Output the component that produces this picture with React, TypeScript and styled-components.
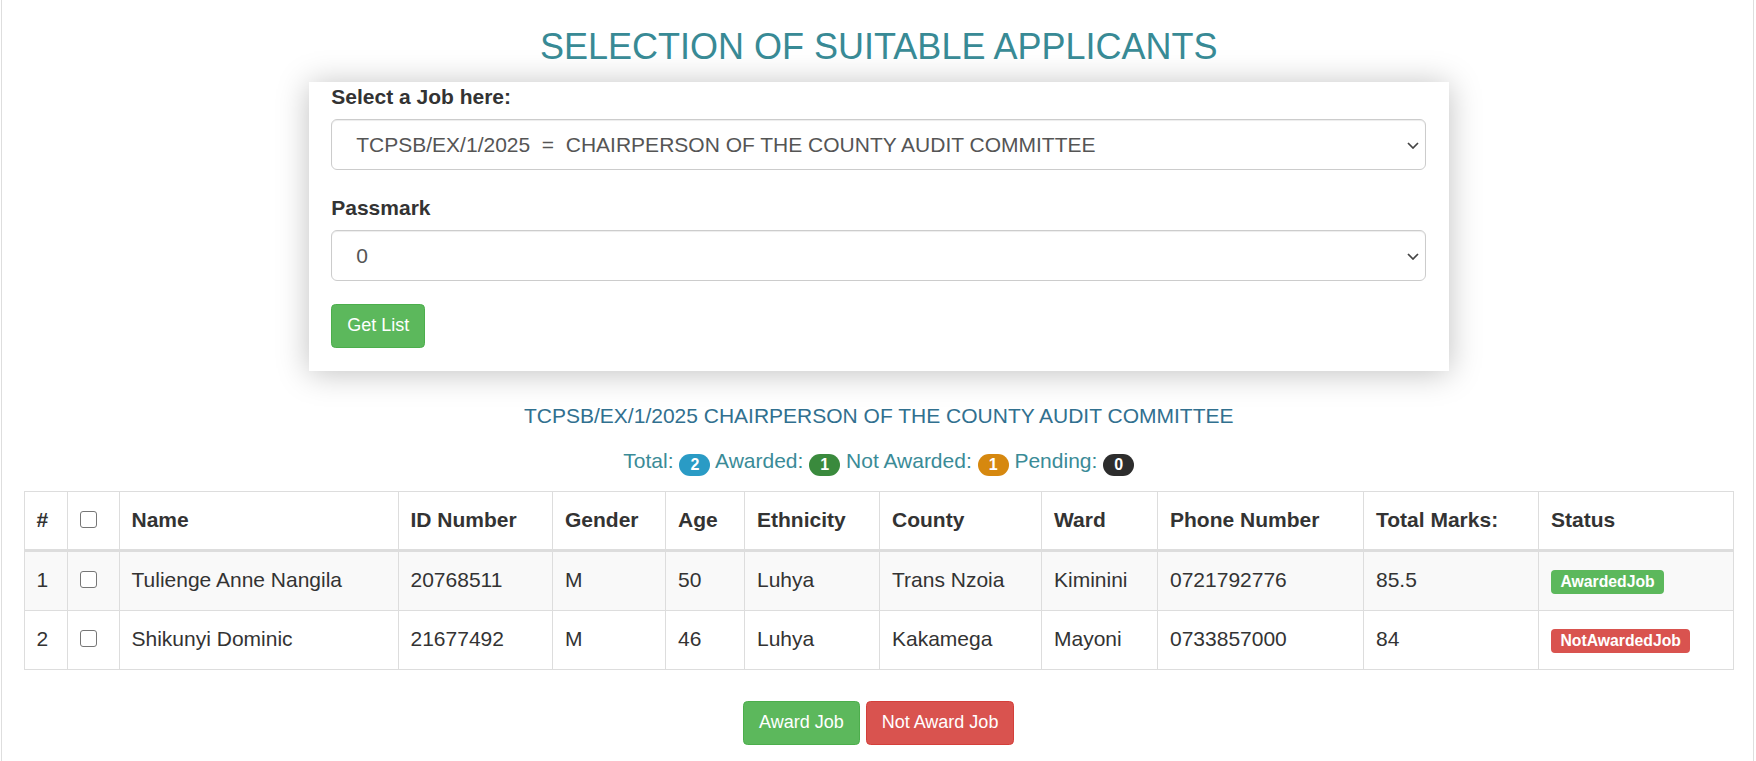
import React from "react";
import styled, { createGlobalStyle } from "styled-components";

const GlobalStyle = createGlobalStyle`
  html, body {
    margin: 0;
    padding: 0;
    background: #fff;
  }
  body {
    font-family: "Liberation Sans", Arial, sans-serif;
    font-size: 21px;
    line-height: 30px;
    color: #333;
  }
  * {
    box-sizing: border-box;
  }
`;

const Page = styled.div`
  min-height: 100vh;
  margin: 0 2px 0 1px;
  padding: 27px 19px 20px 21.5px;
  border-left: 1.5px solid #dedede;
  border-right: 1.5px solid #dedede;
`;

const Title = styled.h3`
  margin: 0 0 15px;
  font-size: 36px;
  line-height: 39.6px;
  font-weight: 400;
  color: #388a95;
  text-align: center;
`;

const Card = styled.div`
  width: 1140px;
  margin: 0 auto;
  padding: 0 22.5px 23px;
  background: #fff;
  box-shadow: 0 2px 30px rgba(0, 0, 0, 0.25);
`;

const FormGroup = styled.div`
  margin-bottom: 22.5px;
`;

const Label = styled.label`
  display: block;
  margin-bottom: 7.5px;
  font-weight: 700;
`;

const SelectWrap = styled.div`
  position: relative;
`;

const Select = styled.select`
  display: block;
  width: 100%;
  height: 51px;
  padding: 0 40px 0 24px;
  font-family: inherit;
  font-size: 21px;
  color: #555;
  background: #fff;
  border: 1.5px solid #ccc;
  border-radius: 6px;
  box-shadow: inset 0 1px 1px rgba(0, 0, 0, 0.075);
  appearance: none;
  outline: none;
`;

const Chevron = styled.svg`
  position: absolute;
  right: 7px;
  top: 50%;
  width: 12px;
  height: 7px;
  margin-top: -3px;
  pointer-events: none;
`;

const Button = styled.button<{ $variant: "success" | "danger" }>`
  display: inline-block;
  padding: 7.5px 15px;
  font-family: inherit;
  font-size: 18px;
  line-height: 27px;
  color: #fff;
  background: ${(p) => (p.$variant === "danger" ? "#d9534f" : "#5cb85c")};
  border: 1.5px solid ${(p) => (p.$variant === "danger" ? "#d43f3a" : "#4cae4c")};
  border-radius: 4.5px;
  cursor: pointer;
`;

const JobTitle = styled.p`
  margin: 30px 0 15px;
  text-align: center;
  color: #31708f;
`;

const Counts = styled.p`
  margin: 0 0 15px;
  text-align: center;
  color: #3a8b97;
`;

const Badge = styled.span<{ $color: string }>`
  display: inline-block;
  min-width: 31px;
  padding: 0 11px;
  font-size: 16px;
  font-weight: 700;
  line-height: 22px;
  color: #fff;
  text-align: center;
  border-radius: 11px;
  vertical-align: -2px;
  background: ${(p) => p.$color};
`;

const Table = styled.table`
  width: 100%;
  table-layout: fixed;
  border-collapse: collapse;
  border: 1px solid #ddd;
  margin-bottom: 31px;
`;

const Col = styled.col<{ $w: number }>`
  width: ${(p) => p.$w}px;
`;

const Th = styled.th`
  padding: 11px 12px 13px;
  line-height: 33px;
  text-align: left;
  font-weight: 700;
  vertical-align: bottom;
  border: 1px solid #ddd;
  border-bottom: 3px solid #ddd;
  white-space: nowrap;
`;

const Row = styled.tr<{ $striped: boolean }>`
  background: ${(p) => (p.$striped ? "#f9f9f9" : "#fff")};
`;

const Td = styled.td`
  padding: 11px 12px 13px;
  line-height: 34px;
  vertical-align: top;
  border: 1px solid #ddd;
  white-space: nowrap;
`;

const Check = styled.input.attrs({ type: "checkbox" })`
  appearance: none;
  width: 17px;
  height: 17px;
  margin: 0;
  background: #fff;
  border: 1.5px solid #767676;
  border-radius: 3px;
  vertical-align: -1px;
`;

const Status = styled.span<{ $tone: "success" | "danger" }>`
  display: inline-block;
  padding: 0.2em 0.6em 0.3em;
  font-size: 15.75px;
  font-weight: 700;
  line-height: 1;
  color: #fff;
  border-radius: 0.25em;
  white-space: nowrap;
  background: ${(p) => (p.$tone === "danger" ? "#d9534f" : "#5cb85c")};
`;

const Actions = styled.div`
  text-align: center;
`;

const columns = [
  { title: "#", w: 43.5 },
  { title: "", w: 51.5 },
  { title: "Name", w: 279 },
  { title: "ID Number", w: 154.5 },
  { title: "Gender", w: 113 },
  { title: "Age", w: 79 },
  { title: "Ethnicity", w: 135 },
  { title: "County", w: 162 },
  { title: "Ward", w: 116 },
  { title: "Phone Number", w: 206 },
  { title: "Total Marks:", w: 175 },
  { title: "Status", w: 195 },
];

const applicants = [
  {
    name: "Tulienge Anne Nangila",
    id: "20768511",
    gender: "M",
    age: 50,
    ethnicity: "Luhya",
    county: "Trans Nzoia",
    ward: "Kiminini",
    phone: "0721792776",
    marks: "85.5",
    status: "AwardedJob",
    tone: "success" as const,
  },
  {
    name: "Shikunyi Dominic",
    id: "21677492",
    gender: "M",
    age: 46,
    ethnicity: "Luhya",
    county: "Kakamega",
    ward: "Mayoni",
    phone: "0733857000",
    marks: "84",
    status: "NotAwardedJob",
    tone: "danger" as const,
  },
];

const ChevronIcon = () => (
  <Chevron viewBox="0 0 12 7">
    <polyline points="1,1 6,6 11,1" fill="none" stroke="#444" strokeWidth="1.7" />
  </Chevron>
);

function App() {
  return (
    <>
      <GlobalStyle />
      <Page>
        <Title>SELECTION OF SUITABLE APPLICANTS</Title>
        <Card>
          <FormGroup>
            <Label>Select a Job here:</Label>
            <SelectWrap>
              <Select defaultValue="1">
                <option value="1">
                  {"TCPSB/EX/1/2025\u00a0 =\u00a0 CHAIRPERSON OF THE COUNTY AUDIT COMMITTEE"}
                </option>
              </Select>
              <ChevronIcon />
            </SelectWrap>
          </FormGroup>
          <FormGroup>
            <Label>Passmark</Label>
            <SelectWrap>
              <Select defaultValue="0">
                <option value="0">0</option>
              </Select>
              <ChevronIcon />
            </SelectWrap>
          </FormGroup>
          <Button $variant="success">Get List</Button>
        </Card>

        <JobTitle>TCPSB/EX/1/2025 CHAIRPERSON OF THE COUNTY AUDIT COMMITTEE</JobTitle>
        <Counts>
          Total: <Badge $color="#2a9bc5">2</Badge> Awarded: <Badge $color="#3a8a3d">1</Badge> Not
          Awarded: <Badge $color="#d6880f">1</Badge> Pending: <Badge $color="#2d2d2d">0</Badge>
        </Counts>

        <Table>
          <colgroup>
            {columns.map((c, i) => (
              <Col key={i} $w={c.w} />
            ))}
          </colgroup>
          <thead>
            <tr>
              {columns.map((c, i) => (
                <Th key={i}>{i === 1 ? <Check /> : c.title}</Th>
              ))}
            </tr>
          </thead>
          <tbody>
            {applicants.map((a, i) => (
              <Row key={a.id} $striped={i % 2 === 0}>
                <Td>{i + 1}</Td>
                <Td>
                  <Check />
                </Td>
                <Td>{a.name}</Td>
                <Td>{a.id}</Td>
                <Td>{a.gender}</Td>
                <Td>{a.age}</Td>
                <Td>{a.ethnicity}</Td>
                <Td>{a.county}</Td>
                <Td>{a.ward}</Td>
                <Td>{a.phone}</Td>
                <Td>{a.marks}</Td>
                <Td>
                  <Status $tone={a.tone}>{a.status}</Status>
                </Td>
              </Row>
            ))}
          </tbody>
        </Table>

        <Actions>
          <Button $variant="success">Award Job</Button>{" "}
          <Button $variant="danger">Not Award Job</Button>
        </Actions>
      </Page>
    </>
  );
}

export default App;
